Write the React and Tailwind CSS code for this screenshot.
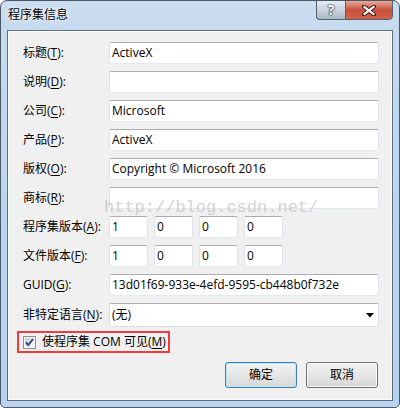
import React from "react";

const FONT = { fontFamily: "'Open Sans','Noto Sans CJK SC',sans-serif" };

function Label({ text, k }) {
  return (
    <div className="w-[86px] shrink-0 text-[12px] text-black leading-none whitespace-nowrap">
      {text}(<span className="underline underline-offset-2">{k}</span>):
    </div>
  );
}

function TextBox({ value, className = "w-[270px]" }) {
  return (
    <div
      className={`${className} h-[22px] bg-white rounded-[2px] border border-[#e2e3ea] border-t-[#abadb3] border-b-[#e3e9ef] flex items-center pl-[2px] text-[12px] text-black leading-none whitespace-nowrap overflow-hidden`}
    >
      {value}
    </div>
  );
}

function Row({ label, k, children }) {
  return (
    <div className="flex items-center h-[22px]">
      <Label text={label} k={k} />
      {children}
    </div>
  );
}

function Checkbox() {
  return (
    <svg width="13" height="13" viewBox="0 0 13 13">
      <defs>
        <linearGradient id="cbg" x1="0" y1="0" x2="1" y2="1">
          <stop offset="0" stopColor="#cbcfd5" />
          <stop offset="1" stopColor="#f6f6f6" />
        </linearGradient>
      </defs>
      <rect x="0.5" y="0.5" width="12" height="12" fill="#fff" stroke="#8e8f8f" />
      <rect x="2" y="2" width="9" height="9" fill="url(#cbg)" />
      <path d="M3 6.3 L5.3 9 L10 3" fill="none" stroke="#1e3f8a" strokeWidth="1.8" />
    </svg>
  );
}

function Version({ vals }) {
  return (
    <div className="flex gap-[6px]">
      {vals.map((v, i) => (
        <TextBox key={i} value={v} className="w-[39px]" />
      ))}
    </div>
  );
}

export default function App() {
  return (
    <div
      className="relative w-[400px] h-[408px] overflow-hidden rounded-t-[7px] rounded-b-[5px] border border-[#4a5866] bg-gradient-to-b from-[#c9dcf0] via-[#bcd5ef] to-[#b7d3f0] flex flex-col"
      style={FONT}
    >
      {/* title bar */}
      <div className="h-[29px] shrink-0 flex items-start">
        <div className="pl-[7px] pt-[6px] text-[12px] text-black leading-[16px] [text-shadow:0_0_6px_#ffffff,0_0_3px_#ffffff]">
          程序集信息
        </div>
        <div className="ml-auto mr-[6px] flex -mt-px">
          <div className="w-[29px] h-[20px] rounded-bl-[4px] border border-[#55606e] border-r-0 bg-gradient-to-b from-[#e4ebf2] via-[#c9d4df] to-[#aab8c6] flex items-center justify-center text-white font-bold text-[14px] leading-none [text-shadow:0_0_1px_#222,0_0_1px_#222,0_0_2px_#333]">
            ?
          </div>
          <div className="w-[48px] h-[20px] rounded-br-[4px] border border-[#55606e] bg-gradient-to-b from-[#e9a89c] via-[#c8503d] to-[#d5604b] flex items-center justify-center">
            <svg width="14" height="11" viewBox="0 0 14 11">
              <path d="M2 1.5 L12 9.5 M12 1.5 L2 9.5" stroke="#3a2020" strokeWidth="4" strokeLinecap="square" />
              <path d="M2.5 2 L11.5 9 M11.5 2 L2.5 9" stroke="#ffffff" strokeWidth="2.2" strokeLinecap="square" />
            </svg>
          </div>
        </div>
      </div>

      {/* content panel */}
      <div className="mx-[6px] mb-[6px] flex-1 border border-[#5f6f80] bg-[#f0f0f0] shadow-[inset_0_0_0_1px_#fdfdfd] pl-[15px] pt-[11px] flex flex-col">
        <div className="flex flex-col gap-[7px]">
          <Row label="标题" k="T"><TextBox value="ActiveX" /></Row>
          <Row label="说明" k="D"><TextBox value="" /></Row>
          <Row label="公司" k="C"><TextBox value="Microsoft" /></Row>
          <Row label="产品" k="P"><TextBox value="ActiveX" /></Row>
          <Row label="版权" k="O"><TextBox value="Copyright © Microsoft 2016" /></Row>
          <Row label="商标" k="R"><TextBox value="" /></Row>
          <Row label="程序集版本" k="A"><Version vals={["1", "0", "0", "0"]} /></Row>
          <Row label="文件版本" k="F"><Version vals={["1", "0", "0", "0"]} /></Row>
          <Row label="GUID" k="G"><TextBox value="13d01f69-933e-4efd-9595-cb448b0f732e" /></Row>
          <div className="flex items-center h-[24px]">
            <Label text="非特定语言" k="N" />
            <div className="w-[270px] h-[24px] bg-white rounded-[2px] border border-[#d9dde3] border-t-[#acb0b6] flex items-center pl-[2px] pr-[4px] text-[12px] text-black leading-none">
              <span>(无)</span>
              <svg className="ml-auto" width="8" height="5" viewBox="0 0 8 5">
                <path d="M0 0 H8 L4 4.5 Z" fill="#000" />
              </svg>
            </div>
          </div>
        </div>

        <div className="mt-[4px] -ml-[6px] self-start flex items-center gap-[6px] h-[22px] pl-[4px] pr-[2px] border-2 border-[#f23b3b]">
          <Checkbox />
          <span className="text-[12px] text-black leading-none whitespace-nowrap">
            使程序集 COM 可见(<span className="underline underline-offset-2">M</span>)
          </span>
        </div>

        <div className="mt-[9px] flex justify-end gap-[9px] pr-[14px]">
          <div className="w-[72px] h-[26px] rounded-[3px] border border-[#3c7fb1] shadow-[inset_0_0_0_1px_#bfe6f8] bg-gradient-to-b from-[#f2f2f2] via-[#e6e6e6] to-[#d8d8d8] flex items-center justify-center text-[12px] text-black leading-none">
            确定
          </div>
          <div className="w-[72px] h-[26px] rounded-[3px] border border-[#707070] shadow-[inset_0_0_0_1px_#fbfbfb] bg-gradient-to-b from-[#f2f2f2] via-[#e6e6e6] to-[#d6d6d6] flex items-center justify-center text-[12px] text-black leading-none">
            取消
          </div>
        </div>
      </div>

      {/* watermark */}
      <div
        className="absolute left-[103px] top-[198px] text-[17px] leading-none text-[#b8b8b8] opacity-60 whitespace-nowrap pointer-events-none"
        style={{ fontFamily: "'Liberation Mono',monospace" }}
      >
        http://blog.csdn.net/
      </div>
    </div>
  );
}
